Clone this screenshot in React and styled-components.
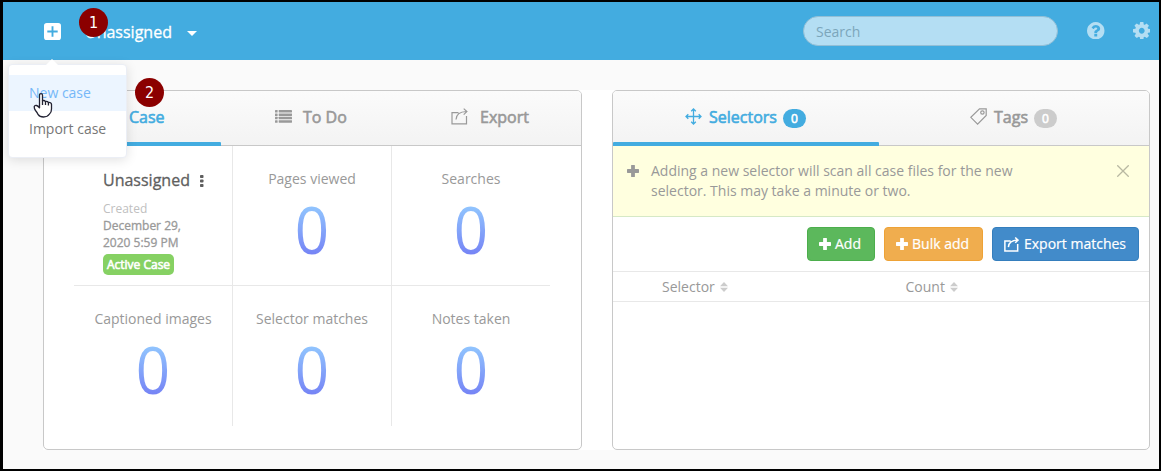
import React from 'react';
import styled, { createGlobalStyle } from 'styled-components';

const Global = createGlobalStyle`
  * { box-sizing: border-box; }
  body { margin: 0; font-family: "Open Sans", sans-serif; font-size: 14px; color: #999; }
`;

const Frame = styled.div`
  position: relative;
  width: 1161px;
  height: 471px;
  border: 2px solid #000;
  border-left-width: 3px;
  background: #fafafa;
  overflow: hidden;
`;

const Header = styled.header`
  display: flex;
  align-items: center;
  height: 58px;
  padding: 0 9px 0 41px;
  background: #43ace0;
  color: #fff;
`;

const CaseName = styled.span`
  margin: 2px 15px 0 24px;
  font-size: 16px;
  line-height: 22px;
  width: 87px;
  -webkit-text-stroke: 0.3px;
  white-space: nowrap;
`;

const Caret = styled.span`
  margin-top: 5px;
  border: 5px solid transparent;
  border-top: 5px solid #fff;
  border-bottom: 0;
`;

const SearchBox = styled.div`
  display: flex;
  align-items: center;
  width: 255px;
  height: 30px;
  margin: 0 29px 0 auto;
  padding: 1px 0 0 12px;
  border: 1px solid #93bfd6;
  border-radius: 15px;
  background: #b4def3;
  color: #7ca6bb;
`;

const HeaderIcon = styled.svg`
  width: ${(p) => p.$size || 17.5}px;
  height: ${(p) => p.$size || 17.5}px;
  margin: 0 ${(p) => p.$gap || 0}px ${(p) => (p.$solid ? 0 : 1)}px 0;
  fill: ${(p) => (p.$solid ? '#fff' : '#b4def3')};
`;

const Main = styled.main`
  display: flex;
  height: 360px;
  margin: 30px 9px 0 40px;
  background: #fff;
`;

const Panel = styled.section`
  display: flex;
  flex-direction: column;
  width: ${(p) => p.$width}px;
  margin-right: ${(p) => p.$gap || 0}px;
  border: 1px solid #c8c8c8;
  border-radius: 5px;
  background: #fff;
  overflow: hidden;
`;

const Tabs = styled.nav`
  display: flex;
  height: 55px;
  flex: none;
  border-bottom: 1px solid #c8c8c8;
  background: linear-gradient(#fbfbfb, #f3f3f3);
`;

const Tab = styled.div`
  position: relative;
  display: flex;
  align-items: center;
  width: ${(p) => p.$width}px;
  padding: 0 0 2px ${(p) => p.$pad}px;
  font-size: 16px;
  -webkit-text-stroke: 0.6px;
  white-space: nowrap;
  color: ${(p) => (p.$active ? '#43ace0' : '#999')};
  &::after {
    content: "";
    display: ${(p) => (p.$active ? 'block' : 'none')};
    position: absolute;
    left: 0;
    right: 0;
    bottom: -1px;
    height: 4px;
    border-radius: 1px 1px 0 0;
    background: #43ace0;
  }
  > svg { flex: none; margin: 0 ${(p) => p.$iconGap}px 2px 0; }
`;

const Pill = styled.span`
  width: 23px;
  height: 19px;
  margin: 3px 0 0 6px;
  border-radius: 10px;
  background: ${(p) => (p.$active ? '#43ace0' : '#ccc')};
  color: #fff;
  font-size: 12px;
  line-height: 19px;
  text-align: center;
`;

const Stats = styled.div`
  display: grid;
  grid-template-columns: 159px 159px 158px;
  grid-template-rows: 140px 140px;
  margin: 0 0 0 30px;
`;

const Stat = styled.div`
  display: flex;
  flex-direction: column;
  align-items: center;
  padding-top: 23px;
  border-right: ${(p) => (p.$right ? '1px solid #e8e8e8' : '0')};
  border-bottom: ${(p) => (p.$bottom ? '1px solid #e8e8e8' : '0')};
  line-height: 20px;
  white-space: nowrap;
`;

const Figure = styled.span`
  margin-top: 9px;
  font-size: 66px;
  font-weight: 400;
  line-height: 60px;
  transform: scaleX(0.91);
  background: linear-gradient(#94ccff 5%, #7583f5 95%);
  background-clip: text;
  -webkit-background-clip: text;
  color: transparent;
`;

const CaseInfo = styled(Stat)`
  align-items: flex-start;
  padding: 24px 0 0 29px;
  font-size: 12px;
  line-height: 17px;
`;

const CaseTitle = styled.div`
  display: flex;
  align-items: center;
  gap: 10px;
  margin-bottom: 9px;
  color: #5f5f5f;
  font-size: 16px;
  line-height: 21px;
  -webkit-text-stroke: 0.3px;
`;

const Muted = styled.span`
  color: #c0c0c0;
`;

const DateLine = styled.span`
  -webkit-text-stroke: 0.3px;
`;

const ActiveTag = styled.span`
  width: 71px;
  height: 21px;
  margin-top: 3px;
  border-radius: 5px;
  background: #86d163;
  color: #fff;
  line-height: 22px;
  text-align: center;
  -webkit-text-stroke: 0.6px;
`;

const Notice = styled.div`
  display: flex;
  height: 71px;
  padding: 15px 20px 0 14px;
  border-bottom: 1px solid #d6e9c6;
  background: #ffffdf;
  line-height: 20px;
  > p { width: 400px; margin: 0 auto 0 12px; }
  > svg { flex: none; margin-top: ${(p) => p.$iconTop}px; }
`;

const Actions = styled.div`
  display: flex;
  justify-content: flex-end;
  gap: 9px;
  padding: 10px 10px 10px 0;
`;

const Button = styled.button`
  display: flex;
  align-items: center;
  gap: ${(p) => p.$gap || 4}px;
  width: ${(p) => p.$width}px;
  height: 34px;
  padding: 0 0 0 11px;
  border: 1px solid ${(p) => p.$edge};
  border-radius: 4px;
  background: ${(p) => p.$fill};
  color: #fff;
  font: 400 14px/20px "Open Sans", sans-serif;
  -webkit-text-stroke: 0.2px;
  white-space: nowrap;
`;

const TableHead = styled.div`
  display: flex;
  height: 31px;
  padding-left: 49px;
  border-top: 1px solid #e8e8e8;
  border-bottom: 1px solid #e8e8e8;
  line-height: 30px;
`;

const Column = styled.div`
  display: flex;
  align-items: center;
  gap: 5px;
  width: 244px;
`;

const Menu = styled.div`
  position: absolute;
  left: 5px;
  top: 62px;
  width: 119px;
  height: 94px;
  padding: 10px 0;
  border: 1px solid #ebeef5;
  border-radius: 4px;
  background: #fff;
  box-shadow: 0 2px 12px rgba(0, 0, 0, 0.12);
  &::before {
    content: "";
    position: absolute;
    left: 37px;
    top: -6px;
    border: 6px solid transparent;
    border-top: 0;
    border-bottom-color: #fff;
  }
`;

const MenuItem = styled.div`
  height: 36px;
  padding-left: 20px;
  line-height: 36px;
  background: ${(p) => (p.$hover ? '#ecf5ff' : 'transparent')};
  color: ${(p) => (p.$hover ? '#76b8f8' : '#777')};
`;

const Step = styled.div`
  position: absolute;
  left: ${(p) => p.$x}px;
  top: ${(p) => p.$y}px;
  width: 29px;
  height: 29px;
  border-radius: 50%;
  background: #8b0000;
  color: #fff;
  font: 16px/29px "DejaVu Sans Condensed", "DejaVu Sans", sans-serif;
  text-align: center;
`;

const Pointer = styled.svg`
  position: absolute;
  left: 30px;
  top: 90px;
  width: 21px;
  height: 26px;
`;

const Plus = ({ color = '#fff' }) => (
  <svg width="12" height="12" viewBox="0 0 12 12" fill={color}>
    <rect x="4.1" width="3.8" height="12" rx=".6" />
    <rect y="4.1" width="12" height="3.8" rx=".6" />
  </svg>
);

const MoveIcon = () => (
  <svg width="17" height="17" viewBox="0 0 17 17" fill="none" stroke="currentColor" strokeWidth="1.3">
    <path d="M8.500 1v15M1 8.500h15M6.200 3.300L8.500 1l2.300 2.300M6.200 13.700L8.500 16l2.300-2.300M3.300 6.200L1 8.500l2.300 2.300M13.700 6.200L16 8.500l-2.300 2.300" />
  </svg>
);

const ShareIcon = ({ size = 17, weight = 1.2 }) => (
  <svg width={size} height={size} viewBox="0 0 17 17" fill="none" stroke="currentColor" strokeWidth={weight}>
    <path d="M7.500 4.600H1v11.300h14.500V8M5 11.500c.2-4.500 3.500-7.700 10.500-8M12.700.600L15.900 3.600l-3.200 3" />
  </svg>
);

const TagIcon = () => (
  <svg width="17" height="17" viewBox="0 0 17 17" fill="none" stroke="currentColor" strokeWidth="1.2">
    <path d="M9.500.800h6.700v6.700L7.600 16.100.8 9.300z" />
    <circle cx="12.400" cy="4.500" r="1.700" />
  </svg>
);

const CloseIcon = () => (
  <svg width="12" height="12" viewBox="0 0 12 12" fill="none" stroke="#b8b8a2" strokeWidth="1.3">
    <path d="M.3.300l11.400 11.400M11.700.300L.3 11.700" />
  </svg>
);

const ListIcon = () => (
  <svg width="17" height="13" viewBox="0 0 17 13" fill="#999">
    {[0, 3.4, 6.8, 10.2].map((y) => (
      <g key={y}>
        <rect x="0" y={y} width="2.6" height="2.5" rx=".5" />
        <rect x="3.7" y={y} width="13.3" height="2.5" rx=".4" />
      </g>
    ))}
  </svg>
);

const SortIcon = () => (
  <svg width="8" height="10" viewBox="0 0 8 10" fill="#ccc">
    <path d="M4 0l4 4.200H0zM0 5.800h8L4 10z" />
  </svg>
);

const StatCell = ({ label, ...rest }) => (
  <Stat {...rest}>
    {label}
    <Figure>0</Figure>
  </Stat>
);

export default function App() {
  return (
    <>
      <Global />
      <Frame>
        <Header>
          <HeaderIcon viewBox="0 0 18 18" $solid $size={17}>
            <path fillRule="evenodd" d="M3 0h12a3 3 0 0 1 3 3v12a3 3 0 0 1-3 3H3a3 3 0 0 1-3-3V3a3 3 0 0 1 3-3zM8 3.500v4.500H3.500v2H8v4.500h2V10h4.500V8H10V3.500z" />
          </HeaderIcon>
          <CaseName>Unassigned</CaseName>
          <Caret />
          <SearchBox>Search</SearchBox>
          <HeaderIcon viewBox="0 128 1536 1536" $gap={28}>
            <path d="M896 1376v-192q0-14-9-23t-23-9h-192q-14 0-23 9t-9 23v192q0 14 9 23t23 9h192q14 0 23-9t9-23zm256-672q0-88-55.500-163t-138.500-116-170-41q-243 0-371 213-15 24 8 42l132 100q7 6 19 6 16 0 25-12 53-68 86-92 34-24 86-24 48 0 85.500 26t37.500 59q0 38-20 61t-68 45q-63 28-115.500 86.500t-52.500 125.500v36q0 14 9 23t23 9h192q14 0 23-9t9-23q0-19 21.500-49.500t54.500-49.500q32-18 49-28.500t46-35 44.500-48 28-60.500 12.500-81zm384 192q0 209-103 385.500t-279.500 279.500-385.500 103-385.500-103-279.500-279.500-103-385.500 103-385.500 279.500-279.500 385.500-103 385.500 103 279.500 279.500 103 385.500z" />
          </HeaderIcon>
          <HeaderIcon viewBox="0 128 1536 1536">
            <path d="M1024 896q0-106-75-181t-181-75-181 75-75 181 75 181 181 75 181-75 75-181zm512-109v222q0 12-8 23t-20 13l-185 28q-19 54-39 91 35 50 107 138 10 12 10 25t-9 23q-27 37-99 108t-94 71q-12 0-26-9l-138-108q-44 23-91 38-16 136-29 186-7 28-36 28h-222q-14 0-24.500-8.500t-11.500-21.500l-28-184q-49-16-90-37l-141 107q-10 9-25 9-14 0-25-11-126-114-165-168-7-10-7-23 0-12 8-23 15-21 51-66.500t54-70.500q-27-50-41-99l-183-27q-13-2-21-12.500t-8-23.500v-222q0-12 8-23t19-13l186-28q14-46 39-92-40-57-107-138-10-12-10-24 0-10 9-23 26-36 98.500-107.500t94.500-71.500q13 0 26 10l138 107q44-23 91-38 16-136 29-186 7-28 36-28h222q14 0 24.500 8.500t11.500 21.500l28 184q49 16 90 37l142-107q9-9 24-9 13 0 25 10 129 119 165 170 7 8 7 22 0 12-8 23-15 21-51 66.500t-54 70.500q26 50 41 98l183 28q13 2 21 12.500t8 23.500z" />
          </HeaderIcon>
        </Header>

        <Main>
          <Panel $width={539} $gap={30}>
            <Tabs>
              <Tab $active $width={177} $pad={85}>Case</Tab>
              <Tab $width={179} $pad={54} $iconGap={11}><ListIcon />To Do</Tab>
              <Tab $width={181} $pad={51} $iconGap={12}><ShareIcon />Export</Tab>
            </Tabs>
            <Stats>
              <CaseInfo $right $bottom>
                <CaseTitle>
                  Unassigned
                  <svg width="4" height="12" viewBox="0 0 4 12" fill="#5f5f5f">
                    <rect width="3.5" height="3" rx=".8" />
                    <rect y="4.5" width="3.5" height="3" rx=".8" />
                    <rect y="9" width="3.5" height="3" rx=".8" />
                  </svg>
                </CaseTitle>
                <Muted>Created</Muted>
                <DateLine>December 29,</DateLine>
                <DateLine>2020 5:59 PM</DateLine>
                <ActiveTag>Active Case</ActiveTag>
              </CaseInfo>
              <StatCell label="Pages viewed" $right $bottom />
              <StatCell label="Searches" $bottom />
              <StatCell label="Captioned images" $right />
              <StatCell label="Selector matches" $right />
              <StatCell label="Notes taken" />
            </Stats>
          </Panel>

          <Panel $width={538}>
            <Tabs>
              <Tab $active $width={266} $pad={72} $iconGap={7}>
                <MoveIcon />Selectors<Pill $active>0</Pill>
              </Tab>
              <Tab $width={270} $pad={91} $iconGap={7}>
                <TagIcon />Tags<Pill>0</Pill>
              </Tab>
            </Tabs>
            <Notice $iconTop={3.5}>
              <Plus color="#999" />
              <p>
                Adding a new selector will scan all case files for the new<br />
                selector. This may take a minute or two.
              </p>
              <CloseIcon />
            </Notice>
            <Actions>
              <Button $width={68} $fill="#5cb85c" $edge="#4cae4c"><Plus />Add</Button>
              <Button $width={99} $fill="#f0ad4e" $edge="#eea236"><Plus />Bulk add</Button>
              <Button $width={147} $fill="#428bca" $edge="#357ebd" $gap={5}><ShareIcon size={15} weight={1.7} />Export matches</Button>
            </Actions>
            <TableHead>
              <Column>Selector<SortIcon /></Column>
              <Column>Count<SortIcon /></Column>
            </TableHead>
          </Panel>
        </Main>

        <Menu>
          <MenuItem $hover>New case</MenuItem>
          <MenuItem>Import case</MenuItem>
        </Menu>
        <Step $x={76} $y={6}>1</Step>
        <Step $x={132} $y={76}>2</Step>
        <Pointer viewBox="0 0 21 26" fill="#fff" stroke="#222233" strokeWidth="1.3" strokeLinejoin="round">
          <path d="M6.500 14.500V3.300Q6.500 1.600 8 1.600t1.500 1.700v5.400q2-.7 2.900.8 2-.6 2.900.9 3-.2 3.200 2v4.500q0 3.500-2 5.100-2 3-6 3-3.800 0-5.300-2.300-1-2.200-2.700-4.200Q1.200 16.800 1.200 14.800q.5-1.700 2.300-1.300 1.500.3 3 2.300z" />
          <path d="M9.500 8.500v4.500M12.500 9.500v3.500M15.400 10.500v3" fill="none" />
        </Pointer>
      </Frame>
    </>
  );
}
